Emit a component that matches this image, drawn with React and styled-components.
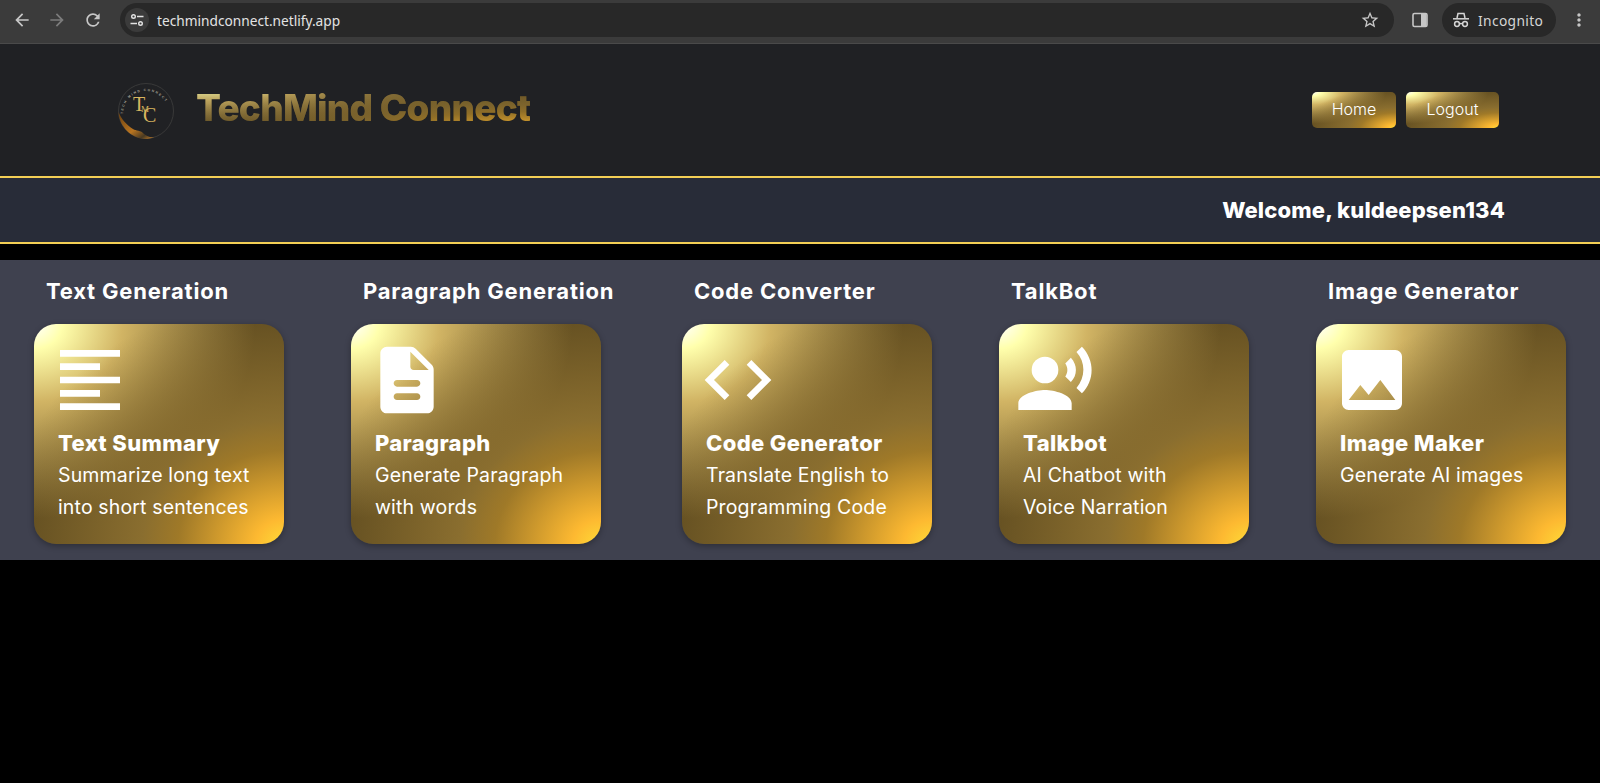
import React from 'react';
import styled, { createGlobalStyle } from 'styled-components';
import {
  MdArrowBack,
  MdArrowForward,
  MdRefresh,
  MdStarBorder,
  MdMoreVert,
  MdFormatAlignLeft,
  MdCode,
  MdRecordVoiceOver,
  MdImage,
} from 'react-icons/md';

const gold = `
  radial-gradient(ellipse farthest-corner at right bottom, #FEDB37 0%, #FDB931 8%, #9f7928 30%, #8A6E2F 40%, transparent 80%),
  radial-gradient(ellipse farthest-corner at left top, #FFFFFF 0%, #FFFFAC 8%, #D1B464 25%, #5d4a1f 62.5%, #5d4a1f 100%)
`;

const GlobalStyle = createGlobalStyle`
  html, body {
    margin: 0;
    padding: 0;
    background: #000;
  }
  * {
    box-sizing: border-box;
  }
`;

const Page = styled.div`
  width: 1600px;
  height: 783px;
  overflow: hidden;
  background: #000;
  font-family: Inter, "Liberation Sans", sans-serif;
  color: #fff;
`;

/* browser chrome */
const Chrome = styled.div`
  height: 44px;
  display: flex;
  align-items: center;
  background: #3b3b3b;
  border-bottom: 1px solid #4a4a4a;
  padding: 0 0 3px 12px;
  color: #c7c7c7;
`;

const NavButton = styled.div`
  width: 20px;
  height: 20px;
  margin-right: ${props => props.$gap}px;
  display: flex;
  align-items: center;
  justify-content: center;
  color: ${props => (props.$muted ? '#7c7c7c' : '#c7c7c7')};
  font-size: 20px;
`;

const Omnibox = styled.div`
  width: 1274px;
  height: 34px;
  margin-left: 3px;
  border-radius: 17px;
  background: #282828;
  display: flex;
  align-items: center;
  padding: 0 14px 0 5px;
`;

const SiteChip = styled.div`
  width: 24px;
  height: 24px;
  border-radius: 50%;
  background: #3b3b3b;
  display: flex;
  align-items: center;
  justify-content: center;
`;

const Url = styled.div`
  margin-left: 8px;
  flex: 1;
  font-family: "Noto Sans", sans-serif;
  font-size: 13.7px;
  color: #e3e3e3;
`;

const SidePanel = styled.div`
  margin-left: 18px;
  width: 16px;
  height: 16px;
  display: flex;
  align-items: center;
`;

const IncognitoPill = styled.div`
  margin-left: 14px;
  width: 114px;
  height: 34px;
  border-radius: 17px;
  background: #282828;
  display: flex;
  align-items: center;
  gap: 7px;
  padding-left: 9px;
  font-family: "Noto Sans", sans-serif;
  font-size: 13.8px;
  letter-spacing: 0.35px;
  color: #d5d5d5;
`;

const MoreButton = styled.div`
  margin-left: 13px;
  display: flex;
  font-size: 20px;
`;

/* site header */
const Header = styled.header`
  height: 132px;
  background: #202124;
  display: flex;
  align-items: center;
  justify-content: space-between;
  padding: 0 101px 1px 116px;
`;

const Brand = styled.div`
  display: flex;
  align-items: center;
  gap: 20px;
`;

const LogoMark = styled.div`
  display: flex;
  margin-top: 3px;
`;

const BrandName = styled.h1`
  margin: 0 0 4px;
  font-size: 37px;
  font-weight: 800;
  letter-spacing: -0.75px;
  line-height: 48px;
  background: ${gold};
  -webkit-background-clip: text;
  background-clip: text;
  color: transparent;
  opacity: 0.88;
`;

const Nav = styled.nav`
  display: flex;
  gap: 10px;
`;

const NavLink = styled.button`
  width: ${props => props.$width}px;
  height: 36px;
  border: 0;
  border-radius: 5px;
  padding: 0 0 2px;
  background: ${gold};
  color: #fff;
  font-family: Inter, sans-serif;
  font-size: 16px;
  font-weight: 300;
`;

const WelcomeBar = styled.div`
  height: 68px;
  background: #282c38;
  border-top: 2px solid #f3cf55;
  border-bottom: 2px solid #f3cf55;
  display: flex;
  align-items: center;
  justify-content: flex-end;
  padding-right: 95px;
  font-size: 22px;
  font-weight: 800;
  letter-spacing: 0.15px;
`;

const Services = styled.section`
  margin-top: 16px;
  height: 300px;
  background: #3f414f;
  padding: 16px 34px;
  display: grid;
  grid-template-columns: 250px 264px 250px 250px 250px;
  column-gap: 67px;
`;

const Column = styled.div`
  display: flex;
  flex-direction: column;
`;

const ColumnTitle = styled.h2`
  margin: 0 0 18px;
  padding-left: 12px;
  font-size: 22px;
  line-height: 30px;
  font-weight: 700;
  letter-spacing: 0.8px;
  white-space: nowrap;
`;

const Card = styled.div`
  width: 250px;
  height: 220px;
  border-radius: 22px;
  padding: 16px;
  background: ${gold};
  box-shadow: 0 2px 6px rgba(0, 0, 0, 0.3);
`;

const CardIcon = styled.div`
  height: 80px;
  font-size: 80px;
  display: flex;
  color: #fff;
`;

const CardTitle = styled.div`
  margin: 8px 0 0 8px;
  font-size: 22px;
  line-height: 31px;
  font-weight: 800;
  letter-spacing: 0.35px;
`;

const CardText = styled.div`
  margin-left: 8px;
  font-size: 19.5px;
  line-height: 32px;
  font-weight: 400;
  letter-spacing: 0.15px;
  white-space: pre-line;
`;

const DescriptionIcon = () => (
  <svg width="1em" height="1em" viewBox="0 0 24 24" fill="currentColor" fillRule="evenodd">
    <path d="M14.59 2.59c-.38-.38-.89-.59-1.42-.59H6c-1.1 0-2 .9-2 2v16c0 1.1.89 2 1.99 2H18c1.1 0 2-.9 2-2V8.83c0-.53-.21-1.04-.59-1.41l-4.82-4.83zM15 18H9c-.55 0-1-.45-1-1s.45-1 1-1h6c.55 0 1 .45 1 1s-.45 1-1 1zm0-4H9c-.55 0-1-.45-1-1s.45-1 1-1h6c.55 0 1 .45 1 1s-.45 1-1 1zm-2-6V3.5L18.5 9H14c-.55 0-1-.45-1-1z" />
  </svg>
);

const TuneIcon = () => (
  <svg width="16" height="16" viewBox="0 0 16 16" fill="none" stroke="#e3e3e3" strokeWidth="1.4">
    <circle cx="4.5" cy="4.5" r="1.8" />
    <path d="M8 4.5h6.5M1.5 11.5H8" />
    <circle cx="11.5" cy="11.5" r="1.8" />
  </svg>
);

const SidePanelIcon = () => (
  <svg width="16" height="16" viewBox="0 0 16 16">
    <rect x="1" y="1.5" width="14" height="13" rx="1.5" fill="none" stroke="#c7c7c7" strokeWidth="1.6" />
    <rect x="9" y="2" width="5.5" height="12" fill="#c7c7c7" />
  </svg>
);

const IncognitoIcon = () => (
  <svg width="20" height="20" viewBox="0 0 20 20" fill="none" stroke="#d5d5d5" strokeWidth="1.5">
    <path d="M6 8l1-4.5h6L14 8" />
    <path d="M2 8.8h16" />
    <circle cx="6" cy="14" r="2.4" />
    <circle cx="14" cy="14" r="2.4" />
    <path d="M8.4 13.6h3.2" />
  </svg>
);

const Logo = () => (
  <svg width="60" height="60" viewBox="0 0 60 60">
    <defs>
      <path id="logo-ring" d="M7 33a23 23 0 1 1 46 0" />
      <linearGradient id="logo-swoosh" x1="0" y1="0" x2="1" y2="1">
        <stop offset="0" stopColor="#6a4010" />
        <stop offset="0.55" stopColor="#b87420" />
        <stop offset="0.8" stopColor="#4a3a22" />
        <stop offset="1" stopColor="#c9822a" />
      </linearGradient>
    </defs>
    <circle cx="30" cy="30" r="27.5" fill="none" stroke="#444442" strokeWidth="0.7" />
    <path d="M2.5 31C3.5 46 15 57 29 58c3 0 6-.5 9-2-4 .5-7-.5-10-3-3-4-8-3-11-5C11 44 5 38 2.5 31z" fill="url(#logo-swoosh)" />
    <text fontSize="3.2" fill="#aaa498" letterSpacing="1.5" fontFamily='"Liberation Sans", sans-serif' fontWeight="700">
      <textPath href="#logo-ring">TECH MIND CONNECT</textPath>
    </text>
    <text fill="#d8b55f" fontFamily='"Liberation Serif", serif' fontSize="20">
      <tspan x="17" y="30">T</tspan>
      <tspan x="25" y="31" fontSize="9">M</tspan>
      <tspan x="27" y="41">C</tspan>
    </text>
  </svg>
);

const services = [
  {
    heading: 'Text Generation',
    title: 'Text Summary',
    text: 'Summarize long text\ninto short sentences',
    icon: <MdFormatAlignLeft />,
  },
  {
    heading: 'Paragraph Generation',
    title: 'Paragraph',
    text: 'Generate Paragraph\nwith words',
    icon: <DescriptionIcon />,
  },
  {
    heading: 'Code Converter',
    title: 'Code Generator',
    text: 'Translate English to\nProgramming Code',
    icon: <MdCode />,
  },
  {
    heading: 'TalkBot',
    title: 'Talkbot',
    text: 'AI Chatbot with\nVoice Narration',
    icon: <MdRecordVoiceOver />,
  },
  {
    heading: 'Image Generator',
    title: 'Image Maker',
    text: 'Generate AI images',
    icon: <MdImage />,
  },
];

const App = () => {
  return (
    <Page>
      <GlobalStyle />
      <Chrome>
        <NavButton $gap={15}><MdArrowBack /></NavButton>
        <NavButton $gap={16} $muted><MdArrowForward /></NavButton>
        <NavButton $gap={14}><MdRefresh /></NavButton>
        <Omnibox>
          <SiteChip><TuneIcon /></SiteChip>
          <Url>techmindconnect.netlify.app</Url>
          <MdStarBorder size={20} color="#c7c7c7" />
        </Omnibox>
        <SidePanel><SidePanelIcon /></SidePanel>
        <IncognitoPill>
          <IncognitoIcon />
          Incognito
        </IncognitoPill>
        <MoreButton><MdMoreVert /></MoreButton>
      </Chrome>

      <Header>
        <Brand>
          <LogoMark><Logo /></LogoMark>
          <BrandName>TechMind Connect</BrandName>
        </Brand>
        <Nav>
          <NavLink $width={84}>Home</NavLink>
          <NavLink $width={93}>Logout</NavLink>
        </Nav>
      </Header>

      <WelcomeBar>Welcome, kuldeepsen134</WelcomeBar>

      <Services>
        {services.map(item => (
          <Column key={item.heading}>
            <ColumnTitle>{item.heading}</ColumnTitle>
            <Card>
              <CardIcon>{item.icon}</CardIcon>
              <CardTitle>{item.title}</CardTitle>
              <CardText>{item.text}</CardText>
            </Card>
          </Column>
        ))}
      </Services>
    </Page>
  );
};

export default App;
